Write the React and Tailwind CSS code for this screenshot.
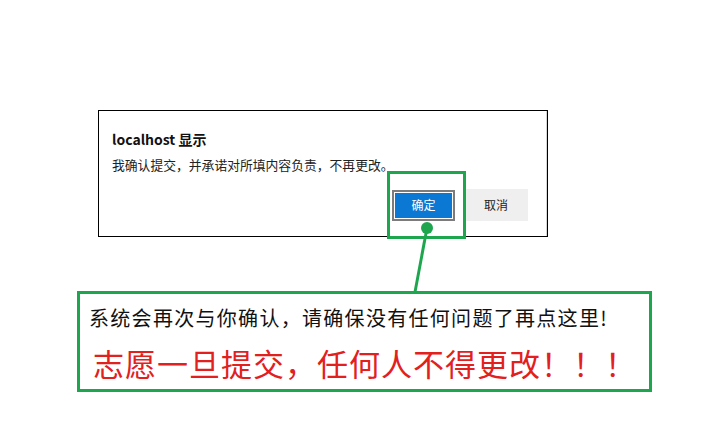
import React from 'react';

const cjk = { fontFamily: '"Noto Sans CJK SC", "Noto Sans", sans-serif' };

export default function App() {
    return (
        <div className="relative w-[720px] h-[445px] bg-white overflow-hidden" style={cjk}>
            {/* Browser alert dialog */}
            <div className="ml-[98px] mt-[110px] w-[450px] h-[127px] border border-black bg-white flex flex-col">
                <div className="flex-1 flex flex-col pl-[13px] pt-[19px] pr-[18px] border-r border-[#d6d6d6]">
                    <div className="text-[14px] leading-[18px] font-bold text-[#111]">localhost 显示</div>
                    <div className="mt-[8px] text-[12.8px] leading-[18px] text-[#222]">我确认提交，并承诺对所填内容负责，不再更改。</div>
                    <div className="mt-auto mb-[15px] flex justify-end items-center gap-[9px]">
                        <div className="w-[63px] h-[31px] border-2 border-[#7c7c7c] p-[1px] bg-white">
                            <div className="w-full h-full bg-[#0b78d4] text-white text-[12px] flex items-center justify-center">确定</div>
                        </div>
                        <div className="w-[64px] h-[32px] bg-[#efefef] text-[12px] text-[#222] flex items-center justify-center">取消</div>
                    </div>
                </div>
            </div>

            {/* Note box */}
            <div className="ml-[77px] mt-[54px] w-[575px] h-[101px] border-[3px] border-[#1ea64f] pl-[9px] pt-[10px]">
                <div className="text-[20px] leading-[28px] text-[#111] tracking-[1.3px]">系统会再次与你确认，请确保没有任何问题了再点这里!</div>
                <div className="mt-[11px] ml-[4px] text-[31px] leading-[40px] text-[#e2201d] tracking-[1px]">志愿一旦提交，任何人不得更改！！！</div>
            </div>

            {/* Highlight around confirm button */}
            <div className="absolute left-[387px] top-[171px] w-[79px] h-[68px] border-[3px] border-[#1ea64f]"></div>

            {/* Connector */}
            <svg className="absolute left-0 top-0" width="720" height="445">
                <line x1="427" y1="228" x2="415" y2="292" stroke="#1ea64f" strokeWidth="3" />
                <circle cx="427" cy="228" r="6" fill="#1ea64f" />
            </svg>
        </div>
    );
}
